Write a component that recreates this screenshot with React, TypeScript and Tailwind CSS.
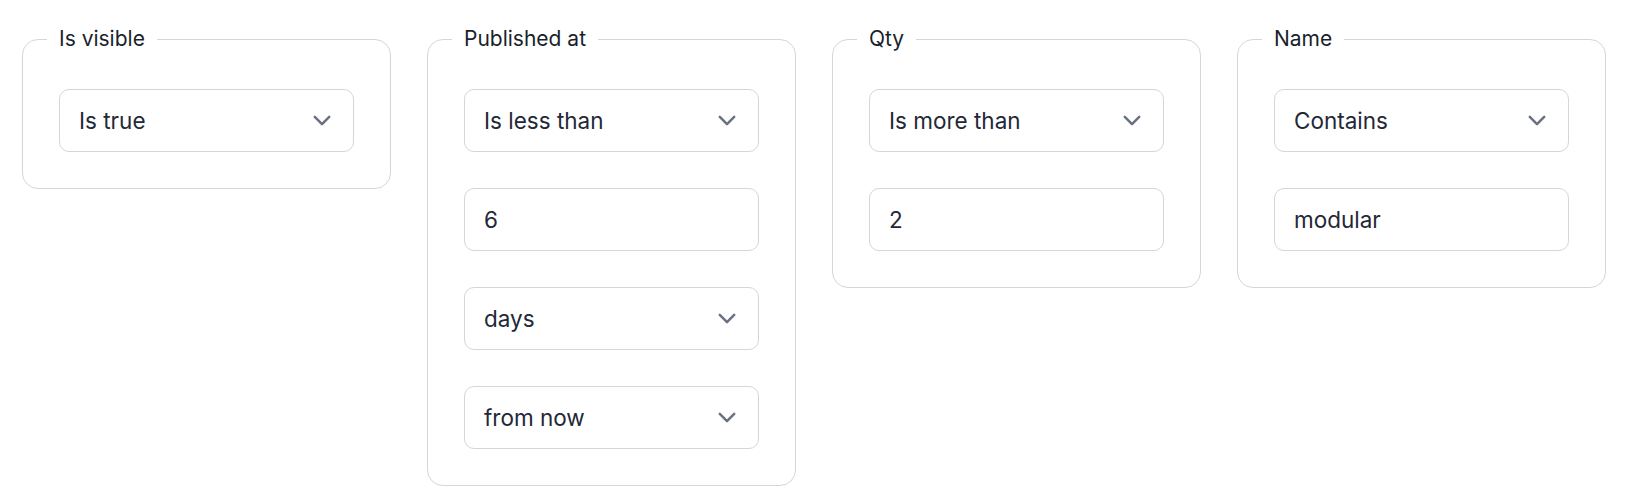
import React from "react";

type Field =
  | { kind: "select"; value: string }
  | { kind: "input"; value: string };

type Filter = {
  label: string;
  fields: Field[];
};

const filters: Filter[] = [
  { label: "Is visible", fields: [{ kind: "select", value: "Is true" }] },
  {
    label: "Published at",
    fields: [
      { kind: "select", value: "Is less than" },
      { kind: "input", value: "6" },
      { kind: "select", value: "days" },
      { kind: "select", value: "from now" },
    ],
  },
  {
    label: "Qty",
    fields: [
      { kind: "select", value: "Is more than" },
      { kind: "input", value: "2" },
    ],
  },
  {
    label: "Name",
    fields: [
      { kind: "select", value: "Contains" },
      { kind: "input", value: "modular" },
    ],
  },
];

const ChevronDown = () => (
  <svg
    viewBox="0 0 20 12"
    className="h-[11px] w-[18px] text-gray-500"
    fill="none"
    stroke="currentColor"
    strokeWidth={2.8}
    strokeLinecap="round"
    strokeLinejoin="round"
  >
    <path d="M2 2l8 8 8-8" />
  </svg>
);

const FilterField = ({ field }: { field: Field }) => (
  <div className="flex h-[63px] items-center justify-between rounded-[10px] border border-[#d4d6de] bg-white pr-[22px] pl-[19px]">
    <span className="text-[22.5px] text-[#232837]">{field.value}</span>
    {field.kind === "select" && <ChevronDown />}
  </div>
);

const FilterCard = ({ filter }: { filter: Filter }) => (
  <fieldset className="flex w-[369px] flex-col gap-9 rounded-2xl border border-[#d4d6de] px-9 pt-9 pb-9">
    <legend className="-ml-3 px-3 text-[21px] leading-7 text-[#1a1f2c]">
      {filter.label}
    </legend>
    {filter.fields.map((field, i) => (
      <FilterField key={i} field={field} />
    ))}
  </fieldset>
);

export default function App() {
  return (
    <div className="flex min-h-[503px] items-start gap-9 bg-white pt-[25px] pl-[22px] font-['Inter',sans-serif]">
      {filters.map((filter) => (
        <FilterCard key={filter.label} filter={filter} />
      ))}
    </div>
  );
}
